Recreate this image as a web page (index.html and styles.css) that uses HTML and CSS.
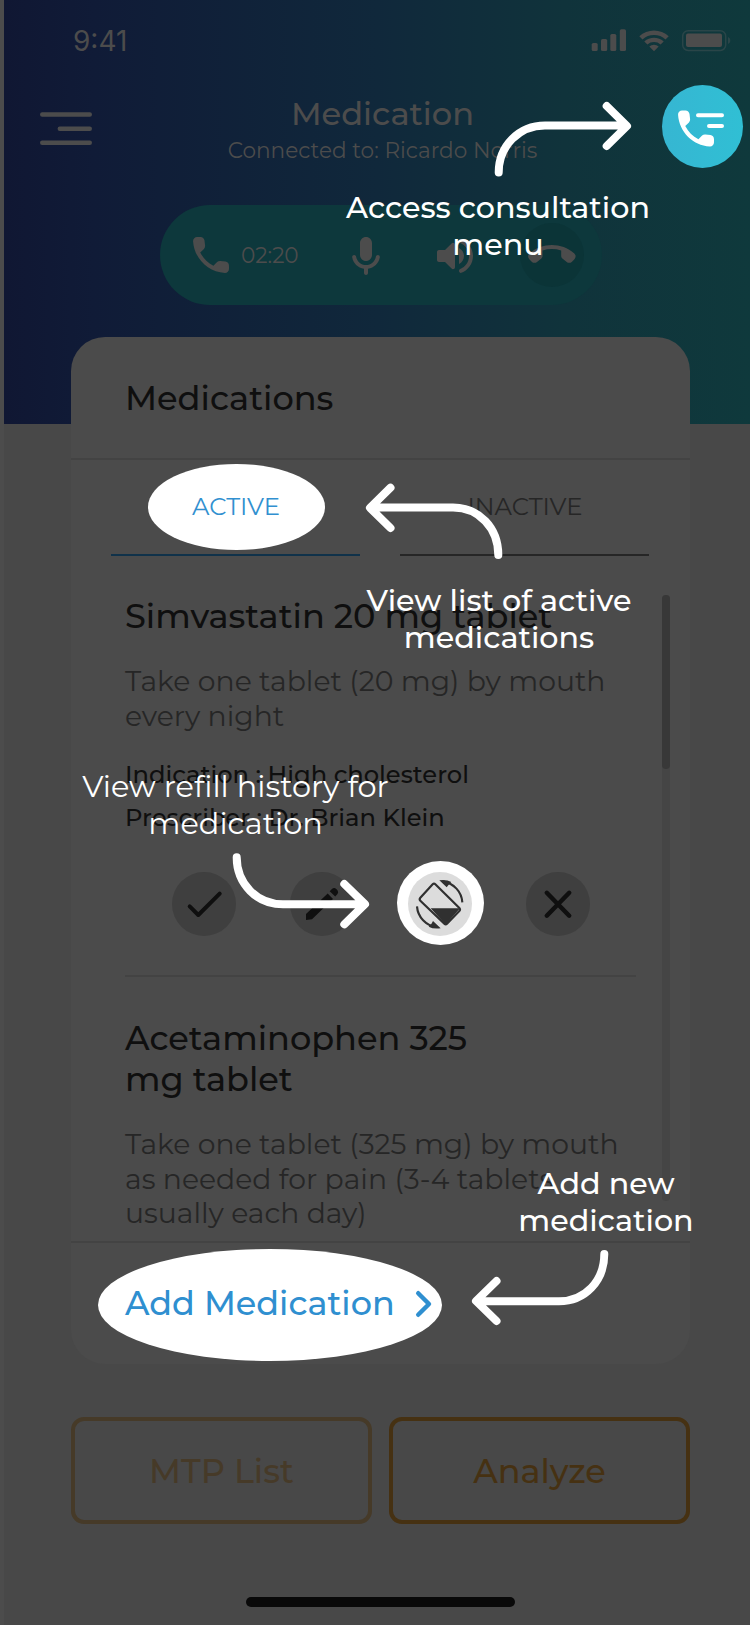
FILE: index.html
```html
<!DOCTYPE html>
<html lang="en">
<head>
<meta charset="utf-8">
<title>Medication</title>
<link rel="stylesheet" href="styles.css">
</head>
<body>
<div class="screen">
  <div class="status">
    <span class="time">9:41</span>
    <svg class="status-icons" width="142" height="24" viewBox="590 28 142 24">
      <rect x="591.7" y="43" width="6" height="8" rx="1.6"/>
      <rect x="601" y="39" width="6.2" height="12" rx="1.6"/>
      <rect x="610.3" y="34" width="6" height="17" rx="1.6"/>
      <rect x="619.8" y="29.3" width="6.2" height="21.7" rx="1.6"/>
      <path d="M639.3 36.3a21.5 21.5 0 0 1 29.4 0l-3.2 3.2a17 17 0 0 0-23 0zM644.3 41.5a14.4 14.4 0 0 1 19.4 0l-3.1 3.1a10 10 0 0 0-13.2 0zM649.3 46.5a7.2 7.2 0 0 1 9.4 0l-4.7 4.7z"/>
      <rect class="battery-shell" x="682.7" y="30.7" width="43" height="19.8" rx="5.5"/>
      <rect x="686" y="33.5" width="36" height="13.5" rx="2"/>
      <path class="battery-nub" d="M728 37c1.800 .7 2.300 2 2.300 3.500s-.5 2.800-2.300 3.500z"/>
    </svg>
  </div>

  <header class="topbar">
    <svg class="menu" width="52" height="34" viewBox="0 0 52 34">
      <path d="M2.200 2.500H49.800M19.800 16.700H49.800M2.200 30.700H49.800"/>
    </svg>
    <div class="heading">
      <h1>Medication</h1>
      <p>Connected to: Ricardo Norris</p>
    </div>
    <div class="consult">
      <svg width="81" height="83" viewBox="662 85 81 83">
        <g transform="translate(672 104.500) scale(2)"><path class="solid" d="M19.230 15.260l-2.540-.29c-.61-.07-1.210.14-1.640.57l-1.840 1.840c-2.830-1.440-5.150-3.750-6.590-6.590l1.850-1.850c.43-.43.64-1.030.57-1.640l-.29-2.520c-.12-1.010-.97-1.770-1.990-1.770H5.030c-1.130 0-2.070.94-2 2.070.53 8.540 7.360 15.360 15.890 15.890 1.130.07 2.070-.87 2.070-2v-1.730c.01-1.010-.75-1.860-1.760-1.980z"/></g>
        <path class="lines" d="M698 115.200H722M709 126H722"/>
      </svg>
    </div>
  </header>

  <div class="call">
    <svg class="phone" width="48" height="48" viewBox="0 0 24 24"><path d="M19.230 15.260l-2.540-.29c-.61-.07-1.210.14-1.640.57l-1.840 1.840c-2.830-1.440-5.150-3.750-6.590-6.590l1.850-1.850c.43-.43.64-1.030.57-1.640l-.29-2.520c-.12-1.010-.97-1.770-1.990-1.770H5.030c-1.130 0-2.070.94-2 2.070.53 8.540 7.360 15.360 15.890 15.890 1.130.07 2.070-.87 2.070-2v-1.730c.01-1.010-.75-1.860-1.760-1.980z"/></svg>
    <span class="timer">02:20</span>
    <svg class="mic" width="48" height="48" viewBox="0 0 24 24"><path d="M12 14c1.660 0 3-1.340 3-3V5c0-1.660-1.340-3-3-3S9 3.340 9 5v6c0 1.660 1.340 3 3 3zm5.910-3c-.49 0-.9.36-.98.85C16.520 14.200 14.470 16 12 16s-4.520-1.800-4.930-4.150c-.08-.49-.49-.85-.98-.85-.61 0-1.090.54-1 1.140.49 3 2.890 5.350 5.910 5.780V20c0 .55.45 1 1 1s1-.45 1-1v-2.080c3.020-.43 5.420-2.780 5.910-5.780.1-.6-.39-1.140-1-1.140z"/></svg>
    <svg class="speaker" width="48" height="48" viewBox="0 0 24 24"><path d="M3 10v4c0 .55.45 1 1 1h3l3.290 3.290c.63.63 1.710.18 1.710-.71V6.410c0-.89-1.080-1.340-1.710-.71L7 9H4c-.55 0-1 .45-1 1zm13.500 2c0-1.770-1.020-3.290-2.500-4.030v8.050c1.480-.73 2.500-2.250 2.500-4.020zM14 4.450v.2c0 .38.25.71.6.85C17.180 6.530 19 9.060 19 12s-1.820 5.470-4.400 6.500c-.36.14-.6.47-.6.85v.2c0 .63.63 1.070 1.210.85C18.600 19.110 21 15.840 21 12s-2.400-7.110-5.790-8.400c-.58-.23-1.210.22-1.210.85z"/></svg>
    <span class="hangup">
      <svg width="48" height="48" viewBox="0 0 24 24"><path d="M4.510 15.480l2-1.590c.48-.38.76-.96.76-1.570v-2.600c3.020-.98 6.290-.99 9.320 0v2.610c0 .61.28 1.190.76 1.570l1.990 1.580c.8.63 1.940.57 2.660-.15l1.220-1.220c.8-.8.8-2.130-.05-2.880-6.410-5.660-16.070-5.660-22.480 0-.85.75-.85 2.080-.05 2.880l1.220 1.220c.71.72 1.850.78 2.650.15z"/></svg>
    </span>
  </div>

  <main class="card">
    <div class="card-head"><h2>Medications</h2></div>
    <nav class="tabs">
      <div class="tab active"><span class="spot tab-spot"></span><span class="label">ACTIVE</span></div>
      <div class="tab"><span class="label">INACTIVE</span></div>
    </nav>
    <div class="list">
      <div class="items">
        <article class="item">
          <h3>Simvastatin 20 mg tablet</h3>
          <p class="dose">Take one tablet (20 mg) by mouth<br>every night</p>
          <p class="meta">Indication : High cholesterol<br>Prescriber : Dr. Brian Klein</p>
          <div class="actions">
            <span class="action"><svg width="64" height="64" viewBox="0 0 64 64"><path class="stroke" d="M17.700 34.300L26.300 43 47.700 21.700"/></svg></span>
            <span class="action"><svg width="64" height="64" viewBox="0 0 64 64"><path d="M16 48V42L37.700 21.500 43 27 22 47.300zM39.700 19.300L42.200 16.800Q44.200 15.300 46 16.800L47.500 18.300Q48.800 20.200 47.500 22L45.200 24.500z"/></svg></span>
            <span class="action refill"><span class="spot refill-spot"></span><svg width="64" height="64" viewBox="84 65 192 192">
              <path class="outline" d="M158 102Q162 98 166 102L238 173Q242 178 238 182L201 220Q197 224 193 220L121 151Q117 147 121 142z"/>
              <path d="M152 174H240L197 223z"/>
              <path class="arc" d="M247 156A67 67 0 0 0 190 94M111 168A67 67 0 0 0 170 230"/>
              <path d="M178 90Q200 87 214 95L206 103 200 111zM182 234Q160 237 146 229L154 221 159 212z"/>
            </svg></span>
            <span class="action"><svg width="64" height="64" viewBox="0 0 64 64"><path class="stroke cross" d="M20.800 20.800L43.200 43.700M43.200 20.800L20.800 43.700"/></svg></span>
          </div>
        </article>
        <article class="item">
          <h3>Acetaminophen 325<br>mg tablet</h3>
          <p class="dose">Take one tablet (325 mg) by mouth<br>as needed for pain (3-4 tablets<br>usually each day)</p>
        </article>
      </div>
      <div class="scrollbar"><div class="thumb"></div></div>
    </div>
    <div class="add">
      <span class="spot add-spot"></span>
      <span class="add-label">Add Medication</span>
      <svg class="chevron" width="18" height="28" viewBox="0 0 18 28"><path d="M3.200 3.200L14 14 3.200 24.800"/></svg>
    </div>
  </main>

  <div class="buttons">
    <div class="button muted">MTP List</div>
    <div class="button">Analyze</div>
  </div>
  <div class="home"></div>
</div>

<div class="tour">
  <svg class="arrows" width="750" height="1625" viewBox="0 0 750 1625">
    <path d="M498.700 172.500C498.700 146 519 125.500 545 125.500H626M606.700 106L627 126 606.700 146"/>
    <path d="M498.300 555C498.300 528 479 507.500 453 507.500H371M390.500 487.700L370 507.800 390.500 528"/>
    <path d="M236.700 857.300C236.700 884 257 904.300 283 904.300H364M344.300 884L365 904.200 344.300 924.300"/>
    <path d="M604.300 1254C604.300 1281 585 1301.300 559 1301.300H477M496.500 1281L476 1301 496.500 1321"/>
  </svg>
  <p class="tip tip-menu">Access consultation<br>menu</p>
  <p class="tip tip-active">View list of active<br>medications</p>
  <p class="tip tip-refill">View refill history for<br>medication</p>
  <p class="tip tip-add">Add new<br>medication</p>
</div>
</body>
</html>
```
FILE: styles.css
```css
* { box-sizing: border-box; }

body {
  margin: 0;
  position: relative;
  width: 750px;
  height: 1625px;
  overflow: hidden;
  background: #4c4c4c;
  font-family: Montserrat, Inter, sans-serif;
}

h1, h2, h3, p { margin: 0; font-weight: 500; }
svg { display: block; flex: none; }

.screen {
  margin-left: 4px;
  height: 1625px;
  background:
    linear-gradient(90deg, #101733 0, #101b37 12%, #10283b 50%, #10333b 75%, #0f393c 100%) 0 0 / 100% 424px no-repeat,
    #484848;
  fill: #4c4c4c;
  color: #4c4c4c;
}

/* status bar */
.status {
  display: flex;
  justify-content: space-between;
  height: 61px;
  padding: 21px 18px 0 69px;
}
.time { font: 400 28px/40px Inter, sans-serif; }
.status-icons { margin-top: 7px; }
.battery-shell { fill: none; stroke: #2a4548; stroke-width: 1.5; }
.battery-nub { fill: #2a4548; }

/* title bar */
.topbar {
  display: grid;
  grid-template-columns: 52px 1fr 81px;
  align-items: start;
  padding: 24px 7px 0 36px;
}
.menu { margin-top: 27px; fill: none; stroke: #4c4c4c; stroke-width: 4.4; stroke-linecap: round; }
.heading { padding: 9px 0 0 11px; text-align: center; }
.heading h1 { font-size: 32.100px; line-height: 40px; }
.heading p { margin-top: 1px; font-size: 21.600px; line-height: 30px; font-weight: 400; }
.consult {
  width: 81px;
  height: 83px;
  border-radius: 50%;
  background: linear-gradient(90deg, #36b6d2, #30bfd4);
}
.consult .solid { fill: #fff; }
.consult .lines { stroke: #fff; stroke-width: 4; stroke-linecap: round; }

/* call controls */
.call {
  display: flex;
  align-items: center;
  width: 442px;
  height: 100px;
  margin: 37px 0 0 156px;
  padding-left: 27px;
  border-radius: 50px;
  background: #0d383c;
}
.timer { width: 101px; margin-left: 6px; font-size: 21.600px; font-weight: 400; line-height: 30px; }
.mic { margin-top: 4px; }
.speaker { margin: 2px 0 0 41px; }
.hangup {
  display: flex;
  align-items: center;
  justify-content: center;
  width: 64px;
  height: 64px;
  margin-left: 41px;
  border-radius: 50%;
  background: #0b3437;
}

/* card */
.card {
  width: 619px;
  height: 1026.500px;
  margin: 32px 0 0 67px;
  border-radius: 34px;
  background: #4b4b4b;
  color: #0f0f0f;
}
.card-head { height: 123px; padding: 41px 0 0 54px; border-bottom: 2px solid #434343; }
.card-head h2 { font-size: 33.600px; line-height: 40px; }

.spot { position: absolute; border-radius: 50%; background: #fff; }

.tabs { display: flex; gap: 40px; margin-left: 40px; }
.tab {
  position: relative;
  width: 249px;
  height: 96px;
  padding: 31px 0 0 1px;
  border-bottom: 2px solid #262626;
  text-align: center;
  font-size: 24.300px;
  line-height: 30px;
  color: #262626;
}
.tab.active { border-color: #10324a; color: #3190d0; }
.label { position: relative; }
.tab-spot { left: 37px; top: 4px; width: 177px; height: 86px; }

.list { display: flex; gap: 26px; height: 685px; padding: 39px 0 0 54px; }
.items { width: 511px; white-space: nowrap; }
.item { border-bottom: 2px solid #434343; padding-bottom: 39.500px; }
.item + .item { border: 0; padding: 39.500px 0 0; }
.item h3 { font-size: 33.600px; line-height: 41px; }
.dose { margin-top: 28px; font-size: 28.250px; font-weight: 400; line-height: 34.700px; color: #262626; }
.meta { margin-top: 19.500px; font-size: 24.200px; line-height: 43px; }
.actions { display: flex; gap: 54px; margin: 33px 0 0 47px; fill: #0f0f0f; }
.action { position: relative; width: 64px; height: 64px; border-radius: 50%; background: #3f3f3f; }
.stroke { fill: none; stroke: #0f0f0f; stroke-width: 4; stroke-linecap: round; stroke-linejoin: round; }
.cross { stroke-width: 4.500; }
.refill-spot { left: -11px; top: -11px; width: 87px; height: 84px; }
.refill svg { position: relative; border-radius: 50%; background: #dcdcdc; fill: #303030; }
.outline, .arc { fill: none; stroke: #303030; stroke-width: 6.500; }

.scrollbar { width: 8px; height: 606px; border-radius: 4px; background: #454545; }
.thumb { height: 174px; border-radius: 4px; background: #383838; }

.add {
  position: relative;
  display: flex;
  height: 122.500px;
  padding: 39.500px 0 0 54px;
  border-top: 2px solid #434343;
}
.add-spot { left: 27px; top: 6px; width: 344px; height: 112px; }
.add-label { position: relative; width: 289.500px; font-size: 33.450px; font-weight: 500; line-height: 40px; color: #2f8fd0; }
.chevron { position: relative; margin-top: 7px; fill: none; stroke: #2f8fd0; stroke-width: 4.400; stroke-linecap: round; stroke-linejoin: round; }

/* bottom buttons */
.buttons { display: flex; gap: 17px; margin: 53.500px 0 0 67px; }
.button {
  display: flex;
  align-items: center;
  justify-content: center;
  width: 301px;
  height: 107px;
  border: 4px solid #463112;
  border-radius: 13px;
  font-size: 33.500px;
  font-weight: 500;
  color: #463112;
}
.button.muted { border-color: #463a28; color: #463a28; }
.home { width: 269px; height: 10px; margin: 73px 0 0 242px; border-radius: 5px; background: #090909; }

/* guided tour layer */
.tour { position: absolute; inset: 0; color: #fff; }
.arrows { fill: none; stroke: #fff; stroke-width: 8; stroke-linecap: round; stroke-linejoin: round; }
.tip {
  position: absolute;
  width: 320px;
  text-align: center;
  white-space: nowrap;
  font-size: 30.200px;
  line-height: 37.200px;
}
.tip-menu { left: 338px; top: 188.500px; }
.tip-active { left: 339px; top: 582px; }
.tip-refill { left: 75.500px; top: 767.500px; font-size: 30.400px; font-weight: 400; }
.tip-add { left: 446px; top: 1164.500px; }
```
